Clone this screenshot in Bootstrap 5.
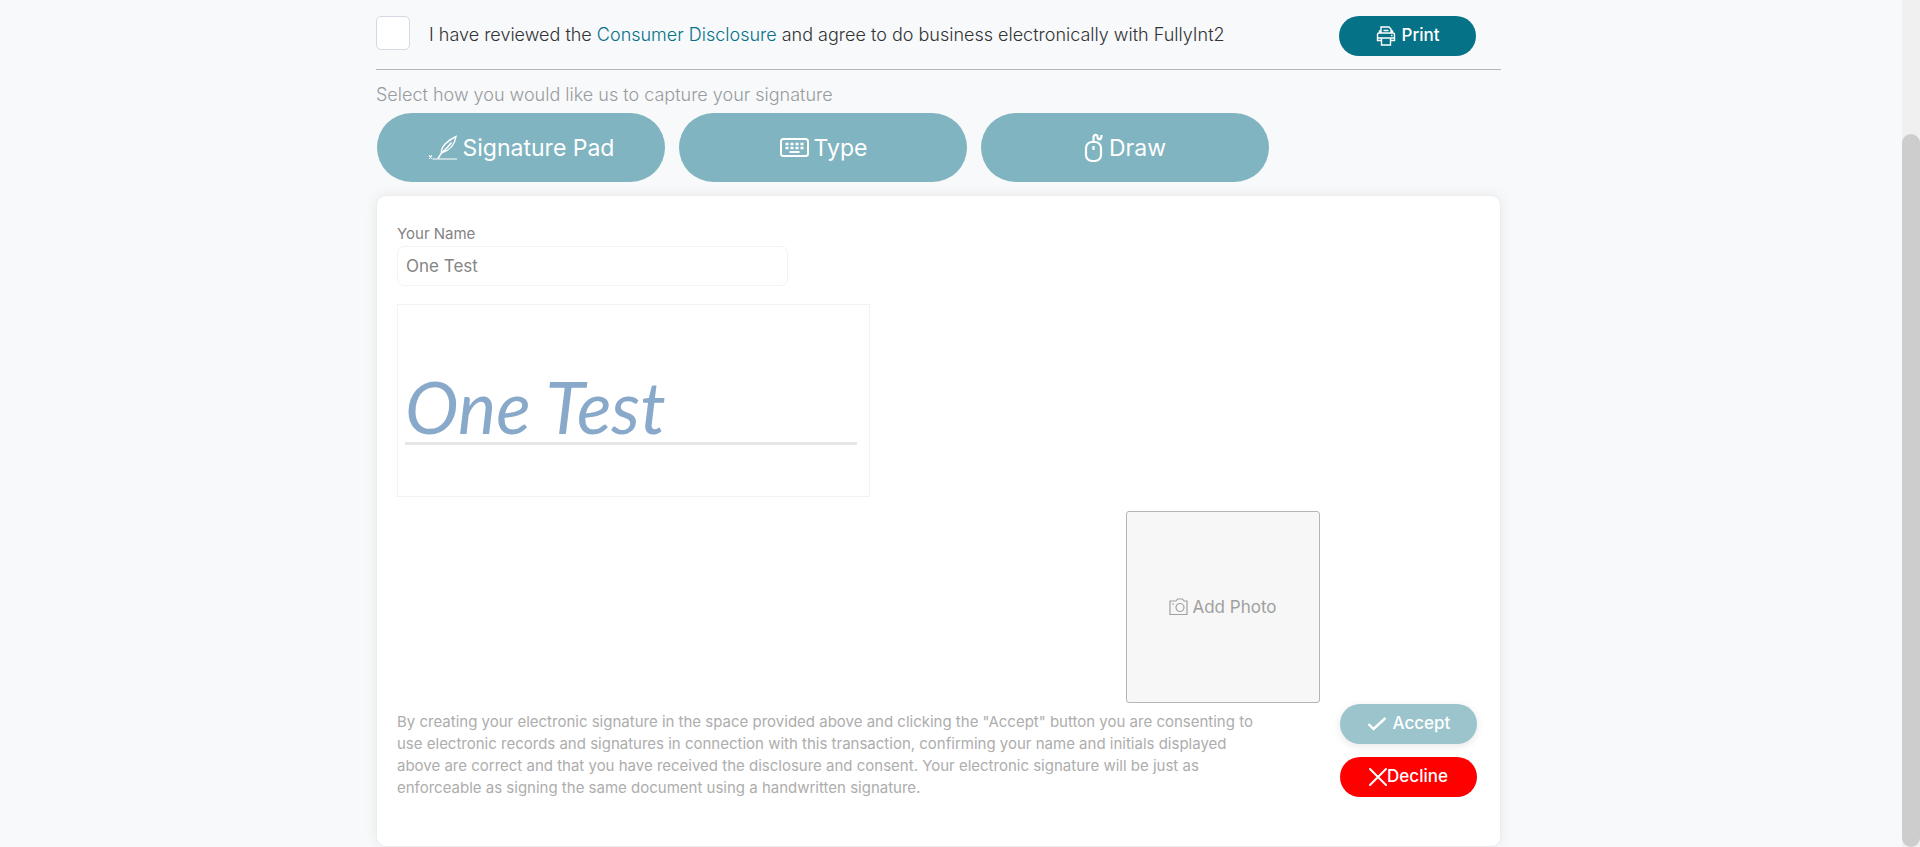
<!DOCTYPE html>
<html lang="en">
<head>
<meta charset="utf-8">
<meta name="viewport" content="width=device-width, initial-scale=1">
<title>Capture your signature</title>
<link href="https://cdn.jsdelivr.net/npm/bootstrap@5.3.0/dist/css/bootstrap.min.css" rel="stylesheet">
<style>
  body { background: #f7f9fb; color: #333; font-family: Inter, "Liberation Sans", sans-serif; font-size: 17px; line-height: 24px; }
  .stage { padding-right: 25px; }
  .sheet { max-width: 1125px; }
  .consent { min-height: 70px; padding-top: 16px; border-bottom: 1px solid #b3b6b9; }
  .consent .form-check-input { width: 34px; height: 34px; border-color: #d5d9e3; border-radius: 5px; }
  .consent label { padding-top: 7px; margin-left: 19px; font-size: 18px; font-weight: 300; }
  .consent a { color: #057287; text-decoration: none; }
  .pill { display: flex; align-items: center; justify-content: center; width: 137px; height: 40px; padding: 0; border: 0; border-radius: 20px; color: #fff; font-size: 17px; font-weight: 500; }
  .pill-print { background: #057287; margin-right: 25px; gap: 6px; }
  .pill-accept, .pill-accept:disabled { background: #9bc4cd; color: #fff; opacity: 1; box-shadow: 0 2px 8px rgba(0,0,0,.1); gap: 6px; }
  .pill-decline, .pill-decline:hover { background: #f00; color: #fff; }
  .answers { gap: 13px; padding-top: 1px; }
  .prompt { color: #999b9d; margin: 13px 0 6px; font-size: 18px; font-weight: 300; }
  .mode { display: flex; align-items: center; justify-content: center; gap: 5px; flex: 0 1 288px; height: 69px; border: 0; border-radius: 35px; background: #80b4c0; color: #fff; font-size: 23px; font-weight: 400; padding: 0; }
  .modes { gap: 14px; padding-left: 1px; }
  .panel { margin-top: 13px; padding: 28px 23px 47px 20px; border: 1px solid #ebedef; border-radius: 10px; background: #fff; box-shadow: 0 0 14px rgba(0,0,0,.07); }
  .panel .form-label { font-size: 15px; line-height: 20px; color: #838383; margin-bottom: 2px; }
  .name-box { max-width: 391px; height: 40px; padding: 0 8px; font-size: 17px; color: #858585; border-color: #f3f3f3; border-radius: 7px; }
  .sign-box { max-width: 473px; height: 193px; margin-top: 18px; padding: 57px 12px 0 7px; border: 1px solid #f2f2f2; }
  .sign-text { border-bottom: 3px solid #e6e6e6; height: 83px; padding-top: 8px; color: #89a9ca; font-family: Lato, cursive; font-style: italic; font-size: 72px; line-height: 72px; }
  .photo { display: flex; align-items: center; justify-content: center; gap: 4px; width: 194px; height: 192px; margin: 14px 157px 0 auto; border: 1px solid #b5b5b5; border-radius: 3px; background: #f7f7f7; color: #a0a0a0; padding: 0; }
  .terms { max-width: 868px; margin: 8px 0 0; color: #adadad; font-size: 15px; line-height: 22px; }
  .rail { flex: 0 0 18px; background: #f0f0f0; padding-top: 134px; }
  .thumb { background: #cdcdcd; border-radius: 9px; }
  svg { flex: none; fill: none; stroke: currentColor; }
</style>
</head>
<body>
<div class="d-flex min-vh-100">
  <main class="stage flex-grow-1">
    <div class="sheet mx-auto">
      <div class="consent d-flex align-items-start">
        <input class="form-check-input m-0 flex-shrink-0" type="checkbox" id="agree">
        <label for="agree">I have reviewed the <a href="#">Consumer Disclosure</a> and agree to do business electronically with FullyInt2</label>
        <button type="button" class="btn pill pill-print ms-auto">
          <svg width="20" height="20" viewBox="0 0 20 20" stroke-width="1.400" aria-hidden="true"><path d="M5 7V1h8l2 2v4M7.500 4.500h5M5 5H3.500v2M15 5h1.500v2M5.500 14.500H1.500V8.500a1.500 1.500 0 0 1 1.500-1.500h14a1.500 1.500 0 0 1 1.500 1.500v6H14.500M1.500 12h17M5.500 12v7h9v-7M15 9.500h1.500"/></svg>
          Print</button>
      </div>
      <p class="prompt">Select how you would like us to capture your signature</p>
      <div class="modes d-flex">
        <button type="button" class="mode">
          <svg width="30" height="26" viewBox="0 0 30 26" aria-hidden="true"><path d="M1 20.500l3 3M4 20.500l-3 3M4.500 24H29" stroke-width="1.200"/><path d="M10 23.500L13.500 18M13.500 18C12.500 12 20 5 28 1.500c-1 7-5 13.500-14.500 16.500zM13.500 18C18 14 21 11 23.500 7.500" stroke-width="1.400"/></svg>
          Signature Pad</button>
        <button type="button" class="mode">
          <svg width="30" height="26" viewBox="0 0 30 26" aria-hidden="true"><rect x="2" y="4" width="27" height="17" rx="2.500" stroke-width="2"/><path d="M6.500 9h18M6.500 13h18" stroke-width="2.600" stroke-dasharray="3 2"/><path d="M10.500 17h10" stroke-width="2"/></svg>
          Type</button>
        <button type="button" class="mode">
          <svg width="20" height="30" viewBox="0 0 20 30" stroke-width="2.200" aria-hidden="true"><rect x="2" y="9" width="15" height="19" rx="6"/><path d="M9.500 9V5c0-4 4-4 4-1s4 4 4-2M9.500 13v4"/></svg>
          Draw</button>
      </div>
      <section class="panel">
        <label class="form-label d-block" for="name">Your Name</label>
        <input class="form-control name-box" id="name" type="text" value="One Test">
        <div class="sign-box"><div class="sign-text">One Test</div></div>
        <button type="button" class="photo">
          <svg width="19" height="18" viewBox="0 0 19 18" stroke-width="1.200" aria-hidden="true"><path d="M1 3h6l1.500-2h5L15 3h3v13.500H1zM3 6h2"/><circle cx="11" cy="9.500" r="4"/></svg>
          Add Photo</button>
        <div class="d-flex justify-content-between">
          <p class="terms">By creating your electronic signature in the space provided above and clicking the "Accept" button you are consenting to use electronic records and signatures in connection with this transaction, confirming your name and initials displayed above are correct and that you have received the disclosure and consent. Your electronic signature will be just as enforceable as signing the same document using a handwritten signature.</p>
          <div class="answers d-flex flex-column flex-shrink-0">
            <button type="button" class="btn pill pill-accept" disabled>
              <svg width="20" height="16" viewBox="0 0 20 16" stroke-width="2.400" aria-hidden="true"><path d="M1.500 8l5 5L18.500 2"/></svg>
              Accept</button>
            <button type="button" class="btn pill pill-decline">
              <svg width="18" height="18" viewBox="0 0 18 18" stroke-width="2" aria-hidden="true"><path d="M1 1l16 16M17 1L1 17" stroke-linecap="round"/></svg>Decline</button>
          </div>
        </div>
      </section>
    </div>
  </main>
  <div class="rail d-flex" aria-hidden="true"><div class="thumb w-100"></div></div>
</div>
<script src="https://cdn.jsdelivr.net/npm/bootstrap@5.3.0/dist/js/bootstrap.bundle.min.js"></script>
</body>
</html>
